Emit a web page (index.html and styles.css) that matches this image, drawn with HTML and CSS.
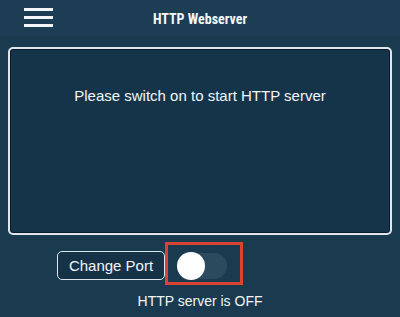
FILE: index.html
```html
<!DOCTYPE html>
<html>
<head>
<meta charset="utf-8">
<link rel="stylesheet" href="styles.css">
</head>
<body>
<header class="topbar">
  <div class="menu"><span></span><span></span><span></span></div>
  <h1 class="title">HTTP Webserver</h1>
</header>
<main class="content">
  <section class="panel">
    <p class="panel-text">Please switch on to start HTTP server</p>
  </section>
  <div class="controls">
    <button class="port-btn">Change Port</button>
    <div class="highlight">
      <div class="switch"><div class="knob"></div></div>
    </div>
  </div>
  <p class="status">HTTP server is OFF</p>
</main>
</body>
</html>
```
FILE: styles.css
```css
* { box-sizing: border-box; }
html, body { margin: 0; padding: 0; }
body {
  width: 400px;
  height: 317px;
  overflow: hidden;
  background: #1a3a4f;
  font-family: "Liberation Sans", Arial, sans-serif;
  color: #f2f5f8;
}
.topbar {
  height: 36px;
  background: #1c3d53;
  display: flex;
  align-items: center;
  position: relative;
}
.menu {
  margin-left: 24px;
  width: 29px;
  display: flex;
  flex-direction: column;
  gap: 5px;
  margin-top: -2px;
}
.menu span {
  display: block;
  height: 3px;
  background: #f4f7fa;
}
.title {
  position: absolute;
  left: 0;
  right: 0;
  top: 0;
  margin: 0;
  line-height: 38px;
  text-align: center;
  font-family: "Liberation Sans Narrow", "Roboto Condensed", "Liberation Sans", sans-serif;
  font-stretch: condensed;
  font-weight: bold;
  font-size: 14px;
  color: #f4f7fa;
}
.content {
  padding: 11px 8px 0 8px;
}
.panel {
  height: 188px;
  border: 2px solid #dfe6ee;
  border-radius: 5px;
  background: #163449;
  box-shadow: inset 0 0 0 1px #0c1c28;
  display: flex;
  justify-content: center;
  padding-top: 38px;
}
.panel-text {
  margin: 0;
  font-size: 15px;
  line-height: 18px;
  color: #f2f5f8;
}
.controls {
  display: flex;
  align-items: center;
  padding-left: 49px;
  margin-top: 7px;
}
.port-btn {
  width: 108px;
  height: 29px;
  border: 1.5px solid #dce4ec;
  border-radius: 5px;
  background: #163247;
  color: #f2f5f8;
  font-family: "Liberation Sans", Arial, sans-serif;
  font-size: 15px;
  padding: 0;
  margin-top: 4px;
}
.highlight {
  width: 78px;
  height: 43px;
  border: 3px solid #d9432f;
  display: flex;
  align-items: center;
  padding-left: 9px;
}
.switch {
  width: 50px;
  height: 26px;
  border-radius: 13px;
  background: #2c4a5e;
  position: relative;
  margin-top: 4px;
}
.knob {
  position: absolute;
  left: 0;
  top: -1px;
  width: 28px;
  height: 28px;
  border-radius: 50%;
  background: #ffffff;
}
.status {
  margin: 7px 0 0 0;
  text-align: center;
  font-size: 14px;
  line-height: 18px;
  color: #f2f5f8;
  padding-left: 0;
}
```
